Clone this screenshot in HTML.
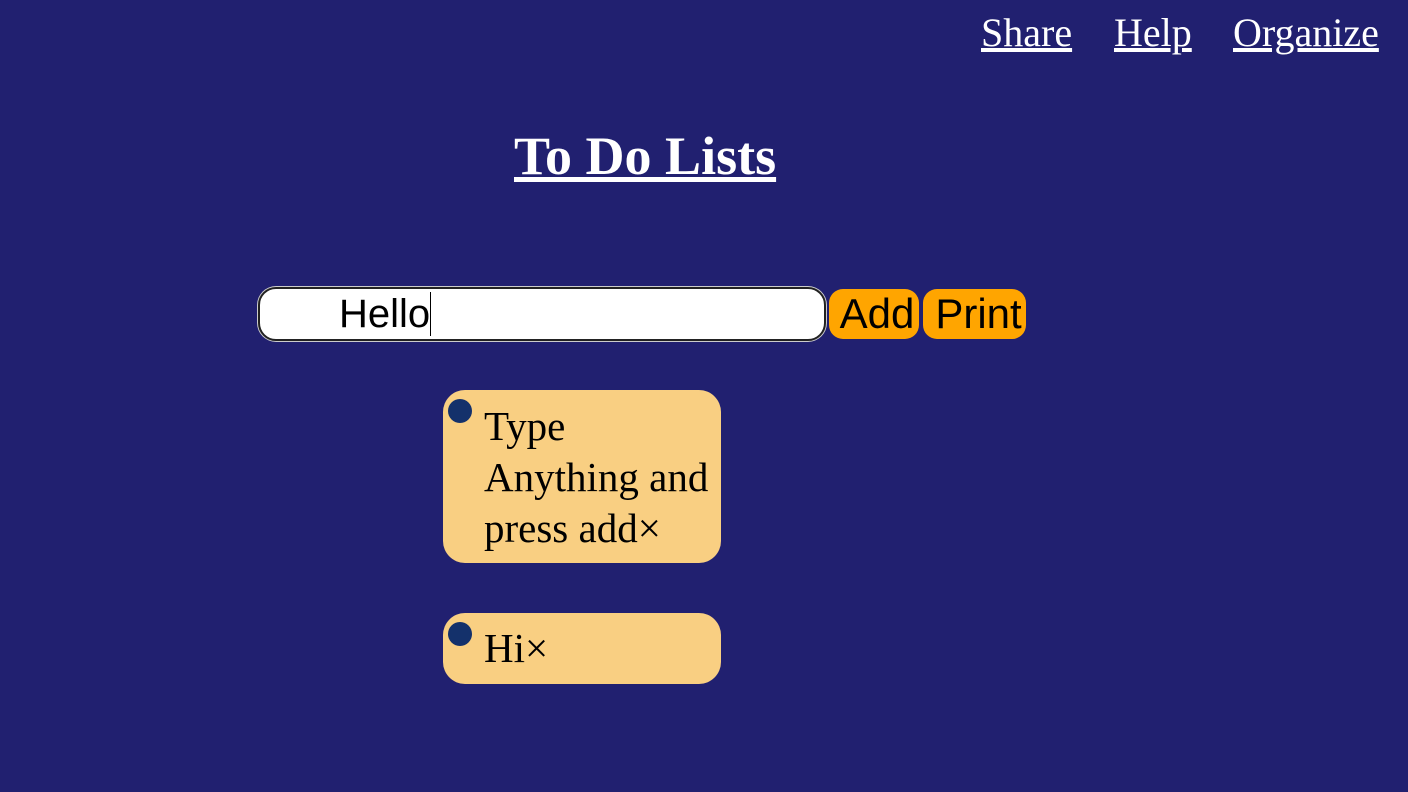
<!DOCTYPE html>
<html><head><style>
body{margin:0;width:1408px;height:792px;background:#212070;overflow:hidden;position:relative;font-family:"Liberation Serif",serif}
a{color:#fff;position:absolute;text-decoration:underline;font-size:40px;line-height:1}
.inp{position:absolute;left:258px;top:287px;width:564px;height:50px;background:#fff;border:2px solid #222;box-shadow:0 0 0 1px #ccc;border-radius:18px}
.inp span{position:absolute;left:79px;top:3px;font:40px "Liberation Sans",sans-serif;color:#000;line-height:44px;border-right:1px solid #000;padding-right:0}
.btn{position:absolute;top:289px;height:50px;background:#ffa500;border-radius:14px;font:42px "Liberation Sans",sans-serif;color:#000;line-height:50px;text-align:center}
.card{position:absolute;left:443px;width:278px;background:#f9cf82;border-radius:22px}
.dot{position:absolute;left:448px;width:24px;height:24px;border-radius:50%;background:#14316b}
.t{position:absolute;left:484px;font-size:41px;line-height:51px;color:#000}
</style></head><body>
<a style="left:981px;top:13px">Share</a>
<a style="left:1114px;top:13px">Help</a>
<a style="left:1233px;top:13px">Organize</a>
<div style="position:absolute;left:514px;top:124px;color:#fff;font-weight:bold;font-size:54px;text-decoration:underline;line-height:64px">To Do Lists</div>
<div class="inp"><span>Hello</span></div>
<div class="btn" style="left:829px;width:90px;text-indent:6px">Add</div>
<div class="btn" style="left:923px;width:103px;text-indent:8px">Print</div>
<div class="card" style="top:390px;height:173px"></div>
<div class="dot" style="top:399px"></div>
<div class="t" style="top:401px">Type<br>Anything and<br>press add×</div>
<div class="card" style="top:613px;height:71px"></div>
<div class="dot" style="top:622px"></div>
<div class="t" style="top:623px">Hi×</div>
</body></html>
